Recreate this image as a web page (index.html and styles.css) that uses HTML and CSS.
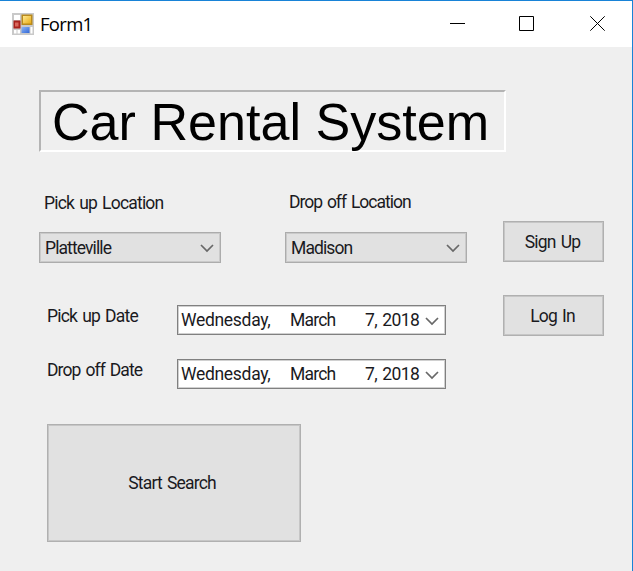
FILE: index.html
```html
<!DOCTYPE html>
<html lang="en">
<head>
<meta charset="utf-8">
<title>Form1</title>
<link rel="stylesheet" href="styles.css">
</head>
<body>
<div class="window">
  <header class="titlebar">
    <svg class="app-icon" width="22" height="22" viewBox="0 0 22 22">
      <defs>
        <linearGradient id="gold" x2="1" y2="1"><stop stop-color="#ffe990"/><stop offset="1" stop-color="#e9ac16"/></linearGradient>
        <linearGradient id="blue" x2="1" y2="1"><stop stop-color="#8bb5f6"/><stop offset="1" stop-color="#3267d6"/></linearGradient>
      </defs>
      <rect width="22" height="22" fill="#c9c9c9"/>
      <path fill="#fff" d="M2 2h6v5H2zM2 17h2.500v3.500H2zM5.500 17H8v3.500H5.500zM18.500 14H20.500v6.500H18.500z"/>
      <rect x="1.500" y="7.500" width="7" height="8" fill="#a8221d"/>
      <rect x="3" y="9.500" width="3.500" height="4" fill="#d9685d"/>
      <rect x="9.500" y="1.500" width="11" height="10.500" fill="#b98a1c"/>
      <rect x="11" y="3" width="8" height="7.500" fill="url(#gold)"/>
      <rect x="9.500" y="14" width="8" height="6" fill="url(#blue)"/>
    </svg>
    <span class="caption">Form1</span>
    <div class="controls">
      <svg width="16" height="16" viewBox="0 0 16 16"><path d="M0 7.500h15"/></svg>
      <svg width="16" height="16" viewBox="0 0 16 16"><path d="M.5.5h14v14H.5z"/></svg>
      <svg class="close" width="16" height="16" viewBox="0 0 16 16"><path d="M.3.300l14.400 14.400M14.700.300L.3 14.700"/></svg>
    </div>
  </header>
  <main class="form">
    <h1 class="heading"><span>Car Rental System</span></h1>
    <div class="columns">
      <div class="search">
        <div class="locations">
          <div class="field">
            <span class="label pick-loc">Pick up Location</span>
            <div class="combo"><span class="value">Platteville</span><svg class="chevron" width="14" height="9" viewBox="0 0 14 9"><path d="M1 1l6 6 6-6"/></svg></div>
          </div>
          <div class="field raised">
            <span class="label drop-loc">Drop off Location</span>
            <div class="combo"><span class="value">Madison</span><svg class="chevron" width="14" height="9" viewBox="0 0 14 9"><path d="M1 1l6 6 6-6"/></svg></div>
          </div>
        </div>
        <div class="dates">
          <div class="date-row">
            <span class="label pick-date">Pick up Date</span>
            <div class="picker"><span class="weekday">Wednesday,</span><span class="month">March</span><span class="day">7, 2018</span><svg class="chevron" width="14" height="9" viewBox="0 0 14 9"><path d="M1 1l6 6 6-6"/></svg></div>
          </div>
          <div class="date-row">
            <span class="label drop-date">Drop off Date</span>
            <div class="picker"><span class="weekday">Wednesday,</span><span class="month">March</span><span class="day">7, 2018</span><svg class="chevron" width="14" height="9" viewBox="0 0 14 9"><path d="M1 1l6 6 6-6"/></svg></div>
          </div>
        </div>
        <button class="button start">Start Search</button>
      </div>
      <div class="account">
        <button class="button">Sign Up</button>
        <button class="button">Log In</button>
      </div>
    </div>
  </main>
</div>
</body>
</html>
```
FILE: styles.css
```css
* { box-sizing: border-box; }
body {
  margin: 0;
  font: 17.500px/22px Roboto, "Liberation Sans", sans-serif;
  letter-spacing: -0.8px;
  word-spacing: 1.500px;
  color: #1a1a1e;
  white-space: nowrap;
}
.window {
  display: flex;
  flex-direction: column;
  width: 633px;
  height: 571px;
  background: #efefef;
  border-top: 1px solid #1883d7;
  border-right: 1px solid #1883d7;
  overflow: hidden;
}
.titlebar {
  display: flex;
  align-items: center;
  height: 46px;
  padding: 0 26px 0 12px;
  background: #fff;
}
.app-icon { margin-right: 6px; }
.caption {
  font: 18.500px/24px "Open Sans", sans-serif;
  letter-spacing: -0.7px;
  color: #000;
}
.controls { display: flex; gap: 53px; margin-left: auto; }
.controls svg { fill: none; stroke: #000; stroke-width: 1; }
.controls .close { margin-left: 2px; }
.form { padding: 43px 0 0 39px; }
.heading {
  width: 467px;
  height: 62px;
  margin: 0;
  padding-left: 11px;
  border: 2px solid;
  border-color: #b4b4b4 #fff #fff #b4b4b4;
  font: 52.100px/60px "Liberation Sans", sans-serif;
  letter-spacing: 0;
  word-spacing: 0;
  color: #000;
}
.columns { display: flex; gap: 36px; }
.search { width: 428px; padding-top: 40px; }
.locations { display: flex; gap: 64px; }
.field { width: 182px; }
.field .label { display: block; margin: 0 0 18px 5px; }
.raised .label { margin: -1px 0 19px 4px; }
.drop-loc { letter-spacing: -1px; }
.drop-date { letter-spacing: -0.9px; }
.combo, .picker { display: flex; align-items: center; }
.combo {
  height: 31px;
  padding: 1px 5px 0;
  background: #e1e1e1;
  border: 1px solid #acacac;
  box-shadow: inset 0 0 0 1px #cacaca;
  justify-content: space-between;
}
.combo .chevron { margin-right: 1px; }
.value { letter-spacing: -0.9px; }
.chevron { fill: none; stroke: #686868; stroke-width: 1.700; }
.dates { display: flex; flex-direction: column; gap: 24px; margin: 42px 0 35px 8px; }
.date-row { display: flex; height: 30px; }
.date-row .label { width: 130px; }
.picker {
  width: 269px;
  height: 30px;
  padding: 0 6px 0 3px;
  background: #fff;
  border: 1px solid #808080;
  box-shadow: inset 0 0 0 1px #d0d0d0;
}
.weekday { width: 109px; letter-spacing: -0.3px; }
.month { width: 75px; }
.day { width: 60px; letter-spacing: -0.6px; }
.picker .chevron { margin-left: auto; margin-top: 3px; }
.button {
  width: 101px;
  height: 41px;
  padding: 0 2px 0 0;
  background: #e1e1e1;
  border: 1px solid #b0b0b0;
  box-shadow: inset 0 0 0 1px #c6c6c6;
  font: inherit;
  color: inherit;
  letter-spacing: inherit;
  word-spacing: inherit;
}
.start { display: block; width: 254px; height: 118px; margin-left: 8px; padding-right: 4px; }
.account { display: flex; flex-direction: column; gap: 33px; padding-top: 69px; }
```
